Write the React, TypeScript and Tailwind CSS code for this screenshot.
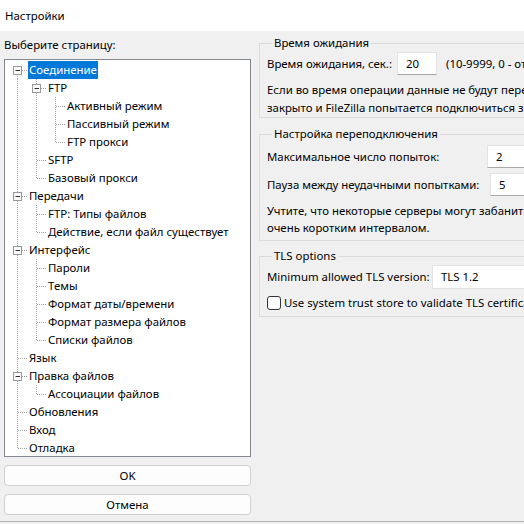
import type { ReactNode } from "react";

type Node = { label: string; selected?: boolean; children?: Node[] };

const pages: Node[] = [
  {
    label: "Соединение",
    selected: true,
    children: [
      {
        label: "FTP",
        children: [
          { label: "Активный режим" },
          { label: "Пассивный режим" },
          { label: "FTP прокси" },
        ],
      },
      { label: "SFTP" },
      { label: "Базовый прокси" },
    ],
  },
  {
    label: "Передачи",
    children: [{ label: "FTP: Типы файлов" }, { label: "Действие, если файл существует" }],
  },
  {
    label: "Интерфейс",
    children: [
      { label: "Пароли" },
      { label: "Темы" },
      { label: "Формат даты/времени" },
      { label: "Формат размера файлов" },
      { label: "Списки файлов" },
    ],
  },
  { label: "Язык" },
  { label: "Правка файлов", children: [{ label: "Ассоциации файлов" }] },
  { label: "Обновления" },
  { label: "Вход" },
  { label: "Отладка" },
];

type Row = { node: Node; guides: boolean[]; first: boolean; last: boolean };

function flatten(nodes: Node[], guides: boolean[], top: boolean): Row[] {
  const rows: Row[] = [];
  nodes.forEach((node, i) => {
    const last = i === nodes.length - 1;
    rows.push({ node, guides, first: top && i === 0, last });
    if (node.children) rows.push(...flatten(node.children, [...guides, !last], false));
  });
  return rows;
}

const DOT = "#a0a0a0";

function Guide({ on }: { on: boolean }) {
  return (
    <svg width="19" height="18" className="shrink-0">
      {on && <line x1="9.5" y1="0" x2="9.5" y2="18" stroke={DOT} strokeDasharray="1 1" />}
    </svg>
  );
}

function Branch({ row }: { row: Row }) {
  return (
    <svg width="19" height="18" className="shrink-0">
      <line x1="9.5" y1={row.first ? 9 : 0} x2="9.5" y2={row.last ? 9 : 18} stroke={DOT} strokeDasharray="1 1" />
      <line x1="10" y1="9.5" x2="19" y2="9.5" stroke={DOT} strokeDasharray="1 1" />
      {row.node.children && (
        <g>
          <rect x="5.5" y="5.5" width="8" height="8" fill="#fbfbfb" stroke="#9a9a9a" />
          <line x1="7.5" y1="9.5" x2="12" y2="9.5" stroke="#303030" />
        </g>
      )}
    </svg>
  );
}

function PageTree() {
  const rows = flatten(pages, [], true);
  return (
    <div className="h-[398px] border border-[#828790] bg-white pl-[3px] pt-[1px]">
      {rows.map((row, i) => (
        <div key={i} className="flex h-[18px] items-center">
          {row.guides.map((g, j) => (
            <Guide key={j} on={g} />
          ))}
          <Branch row={row} />
          <span
            className={
              row.node.selected
                ? "ml-[1px] whitespace-nowrap bg-[#0078d7] px-[1px] leading-[18px] text-white"
                : "ml-[1px] whitespace-nowrap px-[1px] leading-[18px]"
            }
          >
            {row.node.label}
          </span>
        </div>
      ))}
    </div>
  );
}

function Group({ title, className, children }: { title: string; className: string; children: ReactNode }) {
  return (
    <fieldset className={`w-[300px] overflow-hidden border border-[#dcdcdc] px-[7px] ${className}`}>
      <legend className="ml-[5px] whitespace-nowrap px-[2px] leading-[16px]">{title}</legend>
      {children}
    </fieldset>
  );
}

function Field({ value, className }: { value: string; className: string }) {
  return (
    <div
      className={`flex h-[23px] shrink-0 items-center border border-[#e3e3e3] border-b-[#a8a8a8] bg-white pl-[8px] ${className}`}
    >
      {value}
    </div>
  );
}

export default function App() {
  return (
    <div className="h-[524px] w-[524px] overflow-hidden bg-[#f0f0f0] text-[11.4px] text-black [font-family:'Noto_Sans',sans-serif]">
      <div className="flex h-[31px] items-center bg-white pl-[5px]">Настройки</div>

      <div className="flex h-[491px] border-b border-[#b4b4b4] pl-[4px]">
        <div className="flex w-[247px] shrink-0 flex-col">
          <div className="flex h-[28px] items-center">Выберите страницу:</div>
          <PageTree />
          <button className="mt-[8px] h-[21px] rounded-[4px] border border-[#d0d0d0] bg-[#fdfdfd]">OK</button>
          <button className="mt-[8px] h-[21px] rounded-[4px] border border-[#d0d0d0] bg-[#fdfdfd]">Отмена</button>
        </div>

        <div className="ml-[8px] flex shrink-0 flex-col pt-[4px]">
          <Group title="Время ожидания" className="h-[83px] pt-[1px]">
            <div className="flex items-center whitespace-nowrap">
              <span className="w-[130px] shrink-0">Время ожидания, сек.:</span>
              <Field value="20" className="w-[40px]" />
              <span className="ml-[9px] shrink-0">(10-9999, 0 - отключить)</span>
            </div>
            <p className="mt-[6px] whitespace-nowrap leading-[18px]">
              Если во время операции данные не будут переданы, соединение будет
              <br />
              закрыто и FileZilla попытается подключиться заново.
            </p>
          </Group>

          <Group title="Настройка переподключения" className="mt-[8px] h-[115px] pt-[3px]">
            <div className="flex items-center whitespace-nowrap">
              <span className="w-[220px] shrink-0">Максимальное число попыток:</span>
              <Field value="2" className="w-[60px]" />
            </div>
            <div className="mt-[5px] flex items-center whitespace-nowrap">
              <span className="w-[223px] shrink-0">Пауза между неудачными попытками:</span>
              <Field value="5" className="w-[60px]" />
            </div>
            <p className="mt-[6px] whitespace-nowrap leading-[17px]">
              Учтите, что некоторые серверы могут забанить вас, если вы будете
              <br />
              очень коротким интервалом.
            </p>
          </Group>

          <Group title="TLS options" className="mt-[7px] h-[69px] pt-[1px]">
            <div className="flex items-center whitespace-nowrap">
              <span className="w-[165px] shrink-0">Minimum allowed TLS version:</span>
              <div className="flex h-[24px] w-[120px] shrink-0 items-center border border-[#e3e3e3] bg-white pl-[8px]">
                TLS 1.2
              </div>
            </div>
            <label className="mt-[5px] flex items-center whitespace-nowrap">
              <span className="h-[14px] w-[14px] shrink-0 rounded-[3px] border border-[#333] bg-white" />
              <span className="ml-[3px]">Use system trust store to validate TLS certificates</span>
            </label>
          </Group>
        </div>
      </div>
    </div>
  );
}
